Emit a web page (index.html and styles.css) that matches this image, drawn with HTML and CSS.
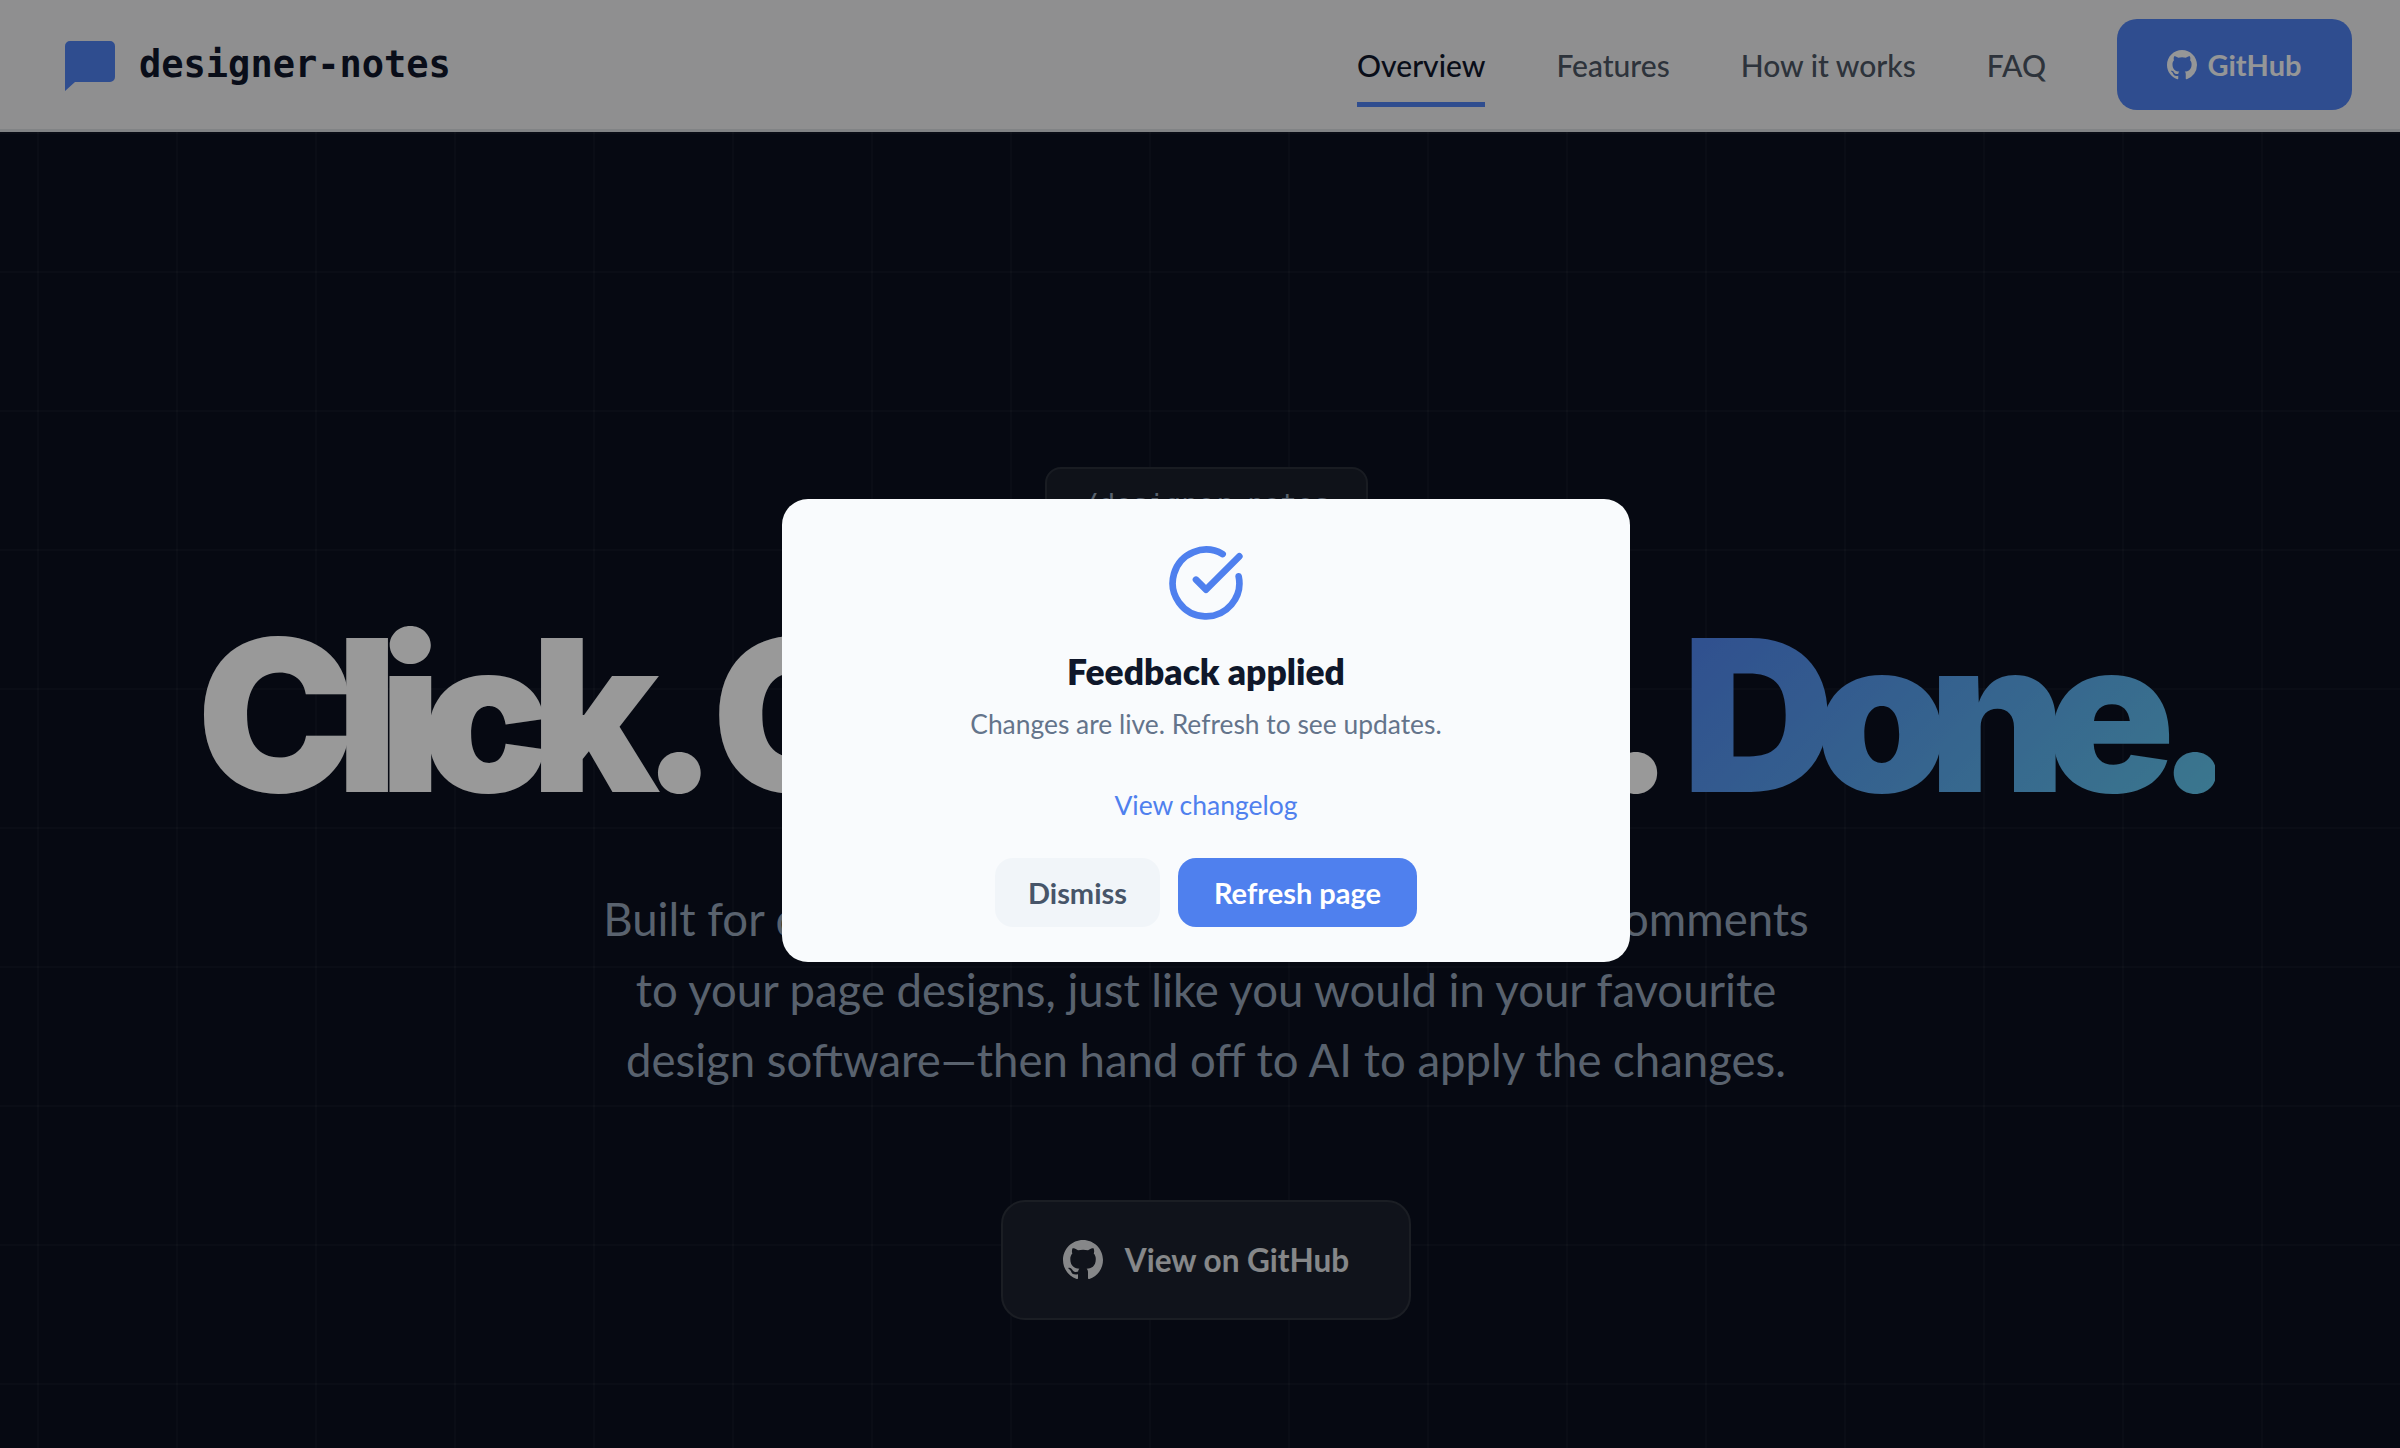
FILE: index.html
```html
<!DOCTYPE html>
<html lang="en">
<head>
  <meta charset="UTF-8">
  <meta name="viewport" content="width=device-width, initial-scale=1.0">
  <title>designer-notes</title>
  <link rel="stylesheet" href="styles.css">
</head>
<body>
  <header class="nav">
    <a class="brand" href="#">
      <svg class="brand-icon" viewBox="0 0 50 50"><path d="M5 0h40a5 5 0 0 1 5 5v31a5 5 0 0 1-5 5H10L0 50V5a5 5 0 0 1 5-5z"/></svg>
      <span>designer-notes</span>
    </a>
    <nav class="nav-links">
      <a class="nav-link active" href="#">Overview</a>
      <a class="nav-link" href="#">Features</a>
      <a class="nav-link" href="#">How it works</a>
      <a class="nav-link" href="#">FAQ</a>
      <a class="nav-btn" href="#">
        <svg class="gh" viewBox="0 0 16 16"><path d="M8 0C3.58 0 0 3.58 0 8c0 3.54 2.29 6.53 5.47 7.59.4.07.55-.17.55-.38 0-.19-.01-.82-.01-1.49-2.01.37-2.53-.49-2.69-.94-.09-.23-.48-.94-.82-1.13-.28-.15-.68-.52-.01-.53.63-.01 1.08.58 1.23.82.72 1.21 1.87.87 2.33.66.07-.52.28-.87.51-1.07-1.78-.2-3.64-.89-3.64-3.95 0-.87.31-1.59.82-2.15-.08-.2-.36-1.02.08-2.12 0 0 .67-.21 2.2.82.64-.18 1.32-.27 2-.27.68 0 1.36.09 2 .27 1.53-1.04 2.2-.82 2.2-.82.44 1.1.16 1.92.08 2.12.51.56.82 1.27.82 2.15 0 3.07-1.87 3.75-3.65 3.95.29.25.54.73.54 1.48 0 1.07-.01 1.93-.01 2.2 0 .21.15.46.55.38A8.013 8.013 0 0016 8c0-4.42-3.58-8-8-8z"/></svg>
        GitHub
      </a>
    </nav>
  </header>

  <main class="hero">
    <div class="badge">/designer-notes</div>
    <h1 class="headline">Click. <span class="comment">Comment.</span> <span class="done">Done.</span></h1>
    <p class="lead">
      Built for designers and product people. Add visual comments<br>
      to your page designs, just like you would in your favourite<br>
      design software—then hand off to AI to apply the changes.
    </p>
    <a class="cta" href="#">
      <svg class="cta-icon" viewBox="0 0 16 16"><path d="M8 0C3.58 0 0 3.58 0 8c0 3.54 2.29 6.53 5.47 7.59.4.07.55-.17.55-.38 0-.19-.01-.82-.01-1.49-2.01.37-2.53-.49-2.69-.94-.09-.23-.48-.94-.82-1.13-.28-.15-.68-.52-.01-.53.63-.01 1.08.58 1.23.82.72 1.21 1.87.87 2.33.66.07-.52.28-.87.51-1.07-1.78-.2-3.64-.89-3.64-3.95 0-.87.31-1.59.82-2.15-.08-.2-.36-1.02.08-2.12 0 0 .67-.21 2.2.82.64-.18 1.32-.27 2-.27.68 0 1.36.09 2 .27 1.53-1.04 2.2-.82 2.2-.82.44 1.1.16 1.92.08 2.12.51.56.82 1.27.82 2.15 0 3.07-1.87 3.75-3.65 3.95.29.25.54.73.54 1.48 0 1.07-.01 1.93-.01 2.2 0 .21.15.46.55.38A8.013 8.013 0 0016 8c0-4.42-3.58-8-8-8z"/></svg>
      View on GitHub
    </a>
  </main>

  <div class="overlay">
    <div class="modal">
      <svg class="modal-icon" viewBox="0 0 24 24"><path d="M21.801 10A10 10 0 1 1 17 3.335"/><path d="m9 11 3 3L22 4"/></svg>
      <h2 class="modal-title">Feedback applied</h2>
      <p class="modal-text">Changes are live. Refresh to see updates.</p>
      <a class="modal-link" href="#">View changelog</a>
      <div class="btn-group">
        <button class="btn btn-light">Dismiss</button>
        <button class="btn btn-blue">Refresh page</button>
      </div>
    </div>
  </div>
</body>
</html>
```

FILE: styles.css
```css
* {
  box-sizing: border-box;
}
html, body {
  height: 100%;
}
body {
  margin: 0;
  font-family: Lato, "Noto Sans", sans-serif;
  background-color: #0a101e;
  background-image:
    linear-gradient(to right, rgba(255, 255, 255, 0.03) 2px, transparent 2px),
    linear-gradient(to bottom, rgba(255, 255, 255, 0.03) 2px, transparent 2px);
  background-size: 139px 139px;
  background-position: 37px 132px;
  overflow: hidden;
}
a {
  text-decoration: none;
}
.nav {
  height: 132px;
  padding: 0 48px 0 65px;
  display: flex;
  justify-content: space-between;
  align-items: center;
  background-color: #eeeef1;
  border-bottom: 3px solid #d8dade;
}
.brand {
  display: flex;
  align-items: center;
  gap: 24px;
  color: #0f172a;
  font-family: "DejaVu Sans Mono", "Liberation Mono", monospace;
  font-size: 37px;
  font-weight: 700;
}
.brand-icon {
  width: 50px;
  height: 50px;
  margin-top: 2px;
  fill: #4f80ee;
}
.nav-links {
  display: flex;
  align-items: center;
  gap: 71px;
  height: 100%;
}
.nav-link {
  height: 100%;
  display: flex;
  align-items: center;
  color: #4b5563;
  font-size: 30px;
  font-weight: 500;
  position: relative;
}
.nav-link.active {
  color: #0f172a;
}
.nav-link.active::after {
  content: "";
  position: absolute;
  left: 0;
  right: 0;
  bottom: 22px;
  height: 5px;
  background-color: #4f80ee;
}
.nav-btn {
  width: 235px;
  height: 91px;
  display: flex;
  align-items: center;
  justify-content: center;
  gap: 10px;
  color: #f8fafc;
  background-color: #4f80ee;
  border-radius: 20px;
  font-size: 29px;
  font-weight: 700;
}
.gh {
  width: 30px;
  height: 30px;
  fill: #f8fafc;
}
.hero {
  padding: 335px 0 0 12px;
  display: flex;
  flex-direction: column;
  align-items: center;
}
.badge {
  width: 323px;
  height: 72px;
  display: flex;
  align-items: center;
  justify-content: center;
  color: #94a3b8;
  font-family: "DejaVu Sans Mono", monospace;
  font-size: 27.4px;
  background-color: #1a1f2b;
  border: 2px solid #2a2f3a;
  border-radius: 16px;
}
.headline {
  margin: 52px 0 0;
  color: #fff;
  font-family: Inter, Lato, sans-serif;
  font-size: 212px;
  font-weight: 900;
  line-height: 1.17;
  letter-spacing: -19.5px;
  white-space: nowrap;
}
.comment {
  margin: 0 6px 0 2px;
  letter-spacing: -22.5px;
}
.done {
  background: linear-gradient(135deg, #4f80ee, #64cbed);
  -webkit-background-clip: text;
  background-clip: text;
  color: transparent;
}
.lead {
  margin: 45px 0 0;
  color: #94a3b8;
  font-size: 45.5px;
  line-height: 70.6px;
  text-align: center;
}
.cta {
  width: 410px;
  height: 120px;
  margin-top: 104px;
  display: flex;
  align-items: center;
  justify-content: center;
  gap: 22px;
  color: #dfe1e5;
  background-color: #1c212d;
  border: 2px solid #2d323d;
  border-radius: 24px;
  font-size: 31.5px;
  font-weight: 700;
}
.cta-icon {
  width: 40px;
  height: 40px;
  fill: #dfe1e5;
}
.overlay {
  position: fixed;
  inset: 0;
  padding: 12px 0 0 12px;
  display: flex;
  align-items: center;
  justify-content: center;
  background-color: rgba(0, 0, 0, 0.4);
}
.modal {
  width: 848px;
  height: 463px;
  padding-top: 44px;
  display: flex;
  flex-direction: column;
  align-items: center;
  background-color: #f9fbfd;
  border-radius: 26px;
}
.modal-icon {
  width: 80px;
  height: 80px;
  fill: none;
  stroke: #4f80ee;
  stroke-width: 2;
  stroke-linecap: round;
  stroke-linejoin: round;
}
.modal-title {
  margin: 27px 0 0;
  color: #0f172a;
  font-size: 35.4px;
  font-weight: 800;
  line-height: 44px;
}
.modal-text {
  margin: 12px 0 0;
  color: #64748b;
  font-size: 26.4px;
  line-height: 36px;
}
.modal-link {
  margin-top: 45px;
  color: #4f80ee;
  font-size: 26.5px;
  line-height: 36px;
}
.btn-group {
  margin-top: 35px;
  display: flex;
  gap: 18px;
}
.btn {
  height: 69px;
  border: none;
  border-radius: 18px;
  font-family: inherit;
  font-size: 29px;
  font-weight: 700;
  cursor: pointer;
}
.btn-light {
  width: 165px;
  color: #475569;
  background-color: #f1f5f9;
}
.btn-blue {
  width: 239px;
  color: #fff;
  background-color: #4f80ee;
}
```
